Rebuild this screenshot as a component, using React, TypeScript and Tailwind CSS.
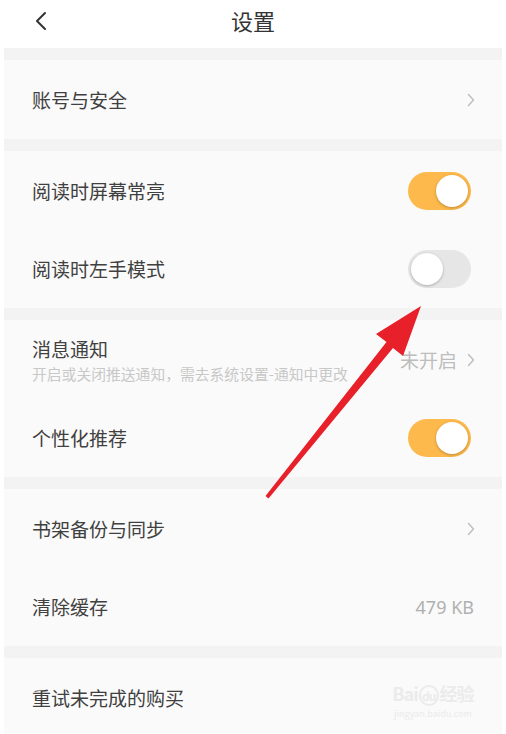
import React from 'react';

const font = { fontFamily: '"Noto Sans CJK SC", "Noto Sans", sans-serif' };

function Chevron() {
  return (
    <svg width="8" height="14" viewBox="0 0 8 14" className="ml-[10px] -mr-[1px]">
      <path d="M1.5 1.5 L6.5 7 L1.5 12.5" fill="none" stroke="#bdbdbd" strokeWidth="1.4" strokeLinecap="round" strokeLinejoin="round" />
    </svg>
  );
}

function Toggle({ on }: { on: boolean }) {
  return (
    <div className={`w-[63px] h-[38px] mr-[3px] rounded-full p-[3px] flex ${on ? 'bg-[#fdb94b] justify-end' : 'bg-[#e6e6e6] justify-start'}`}>
      <div className="w-[32px] h-[32px] rounded-full bg-white shadow-[0_1px_3px_rgba(0,0,0,0.25)]" />
    </div>
  );
}

function Row({ label, sub, right }: { label: string; sub?: string; right?: React.ReactNode }) {
  return (
    <div className="h-[78px] flex items-center justify-between pl-[28px] pr-[28px]">
      <div className="flex flex-col">
        <span className="text-[19px] leading-[26px] text-[#404040]">{label}</span>
        {sub && <span className="text-[14.8px] leading-[20px] mt-[2px] text-[#c8c8c8]">{sub}</span>}
      </div>
      <div className="flex items-center">{right}</div>
    </div>
  );
}

function Gap() {
  return <div className="h-[12px] bg-[#f3f3f3]" />;
}

export default function App() {
  return (
    <div className="relative w-[506px] h-[734px] overflow-hidden bg-white" style={font}>
      <div className="h-[48px] relative flex items-center justify-center">
        <svg width="14" height="20" viewBox="0 0 14 20" className="absolute left-[34px] top-[11px]">
          <path d="M11 2 L3 10 L11 18" fill="none" stroke="#333" strokeWidth="2" strokeLinecap="round" strokeLinejoin="round" />
        </svg>
        <span className="text-[22px] text-[#333] -mt-[8px]">设置</span>
      </div>
      <div className="px-[4px] bg-white">
        <Gap />
        <div className="bg-[#fafafa] h-[79px] flex flex-col justify-center">
          <Row label="账号与安全" right={<Chevron />} />
        </div>
        <Gap />
        <div className="bg-[#fafafa] pt-[1px]">
          <Row label="阅读时屏幕常亮" right={<Toggle on />} />
          <Row label="阅读时左手模式" right={<Toggle on={false} />} />
        </div>
        <Gap />
        <div className="bg-[#fafafa] pt-[1px]">
          <Row
            label="消息通知"
            sub="开启或关闭推送通知，需去系统设置-通知中更改"
            right={<><span className="text-[19px] text-[#bdbdbd]">未开启</span><Chevron /></>}
          />
          <Row label="个性化推荐" right={<Toggle on />} />
        </div>
        <Gap />
        <div className="bg-[#fafafa] pt-[1px]">
          <Row label="书架备份与同步" right={<Chevron />} />
          <Row label="清除缓存" right={<span className="text-[18px] text-[#b0b0b0]" style={{ fontFamily: '"Noto Sans", sans-serif' }}>479 KB</span>} />
        </div>
        <Gap />
        <div className="bg-[#fafafa] pt-[1px]">
          <Row label="重试未完成的购买" />
        </div>
      </div>

      <div className="absolute left-[388px] top-[684px] w-[90px] flex flex-col items-center text-[#ebebeb] leading-none">
        <span className="text-[18px] font-bold tracking-tighter whitespace-nowrap">Bai<span className="text-[12px] border-2 border-[#ebebeb] rounded-full px-[1px] mx-[1px]">du</span>经验</span>
        <span className="text-[9px] mt-[7px] whitespace-nowrap">jingyan.baidu.com</span>
      </div>

      <svg className="absolute left-0 top-0 pointer-events-none" width="506" height="734" viewBox="0 0 506 734">
        <polygon
          points="421,306 403,356 393,348 268.5,498.5 265.5,496 386.5,342 376,334"
          fill="#e8202a"
        />
      </svg>
    </div>
  );
}
